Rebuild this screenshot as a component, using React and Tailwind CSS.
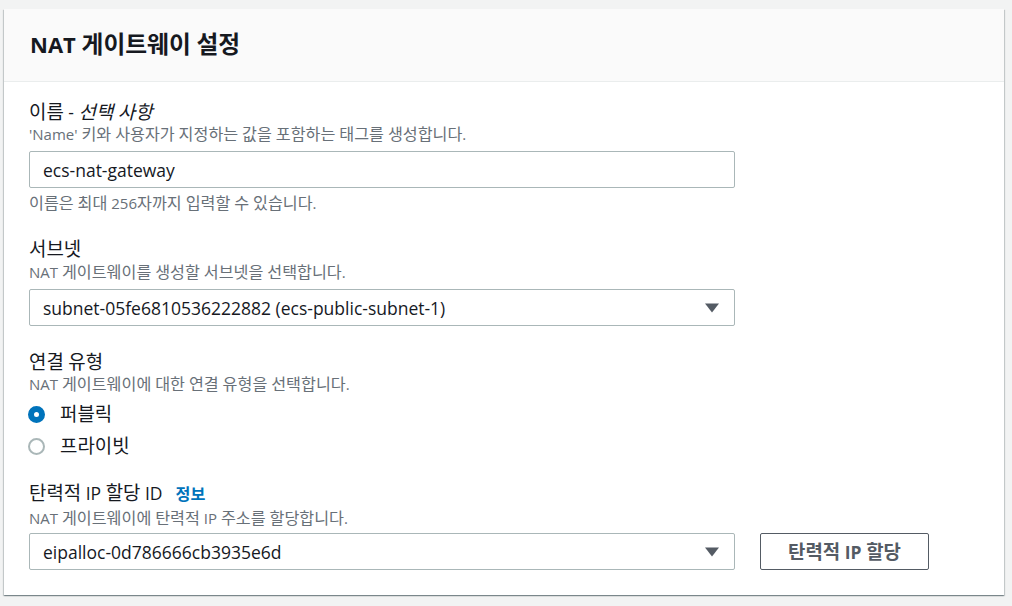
import React from "react";

const font = { fontFamily: "'Open Sans', 'Noto Sans CJK KR', sans-serif" };

// Hangul runs are rendered slightly larger to match the wider Korean face of the reference.
function T({ children }) {
  const s = String(children);
  const parts = s.split(/([\u1100-\u11FF\u3130-\u318F\uAC00-\uD7A3]+)/);
  return (
    <>
      {parts.map((p, i) =>
        /[\u1100-\u11FF\u3130-\u318F\uAC00-\uD7A3]/.test(p) ? (
          <span key={i} className="text-[1.08em]">
            {p}
          </span>
        ) : (
          <React.Fragment key={i}>{p}</React.Fragment>
        )
      )}
    </>
  );
}

function Caret() {
  return (
    <svg width="14" height="10" viewBox="0 0 14 10" className="shrink-0">
      <path d="M0 0.5 L14 0.5 L7 9.5 Z" fill="#545b64" />
    </svg>
  );
}

function Label({ children }) {
  return <div className="text-[17.5px] leading-[22px] text-[#16191f]">{children}</div>;
}

function Desc({ children, className = "" }) {
  return (
    <div className={"text-[15px] leading-[20px] text-[#687078] " + className}>
      <T>{children}</T>
    </div>
  );
}

function SelectBox({ value, className = "" }) {
  return (
    <div
      className={
        "w-[706px] h-[37px] border border-[#aab7b8] rounded-[2px] bg-white flex items-center justify-between pl-[13px] pr-[15px] " +
        className
      }
    >
      <span className="text-[17.5px] text-[#16191f] leading-[22px]">{value}</span>
      <Caret />
    </div>
  );
}

function Radio({ checked, label }) {
  return (
    <div className="flex items-center h-[24px]">
      {checked ? (
        <span className="w-[17px] h-[17px] rounded-full border-[6px] border-[#0073bb] bg-white -ml-[1px] box-border" />
      ) : (
        <span className="w-[17px] h-[17px] rounded-full border-2 border-[#aab7b8] bg-white -ml-[1px] box-border" />
      )}
      <span className="ml-[15px] text-[17.5px] leading-[22px] text-[#16191f]">
        <T>{label}</T>
      </span>
    </div>
  );
}

export default function App() {
  return (
    <div className="w-[1012px] h-[606px] bg-[#f2f3f3] pt-[9px] pl-[4px] overflow-hidden" style={font}>
      <div className="w-[1000px] bg-white shadow-[0_1px_1px_0_rgba(0,28,36,0.3),1px_1px_1px_0_rgba(0,28,36,0.15),-1px_1px_1px_0_rgba(0,28,36,0.15)]">
        <div className="bg-[#fafafa] border-b border-[#eaeded] pl-[26px] pt-[20px] pb-[22px]">
          <h2 className="text-[22px] leading-[30px] font-bold text-[#16191f]">
            <T>NAT 게이트웨이 설정</T>
          </h2>
        </div>
        <div className="pl-[25px] pt-[19px] pb-[25px]">
          <div>
            <Label>
              <T>이름 - </T>
              <i>
                <T>선택 사항</T>
              </i>
            </Label>
            <Desc className="mt-[1px]">'Name' 키와 사용자가 지정하는 값을 포함하는 태그를 생성합니다.</Desc>
            <div className="mt-[7px] w-[706px] h-[37px] border border-[#aab7b8] rounded-[2px] bg-white flex items-center pl-[13px]">
              <span className="text-[17.5px] text-[#16191f] leading-[22px]">ecs-nat-gateway</span>
            </div>
            <Desc className="mt-[5px]">이름은 최대 256자까지 입력할 수 있습니다.</Desc>
          </div>

          <div className="mt-[25px]">
            <Label>
              <T>서브넷</T>
            </Label>
            <Desc className="mt-[2px]">NAT 게이트웨이를 생성할 서브넷을 선택합니다.</Desc>
            <SelectBox className="mt-[7px]" value="subnet-05fe6810536222882 (ecs-public-subnet-1)" />
          </div>

          <div className="mt-[25px]">
            <Label>
              <T>연결 유형</T>
            </Label>
            <Desc className="mt-[1px]">NAT 게이트웨이에 대한 연결 유형을 선택합니다.</Desc>
            <div className="mt-[8px] flex flex-col gap-[8px]">
              <Radio checked label="퍼블릭" />
              <Radio label="프라이빗" />
            </div>
          </div>

          <div className="mt-[24px]">
            <div className="flex items-baseline">
              <Label>
                <T>탄력적 IP 할당 ID</T>
              </Label>
              <span className="ml-[13px] text-[15px] font-semibold text-[#0073bb]">
                <T>정보</T>
              </span>
            </div>
            <Desc className="mt-[2px]">NAT 게이트웨이에 탄력적 IP 주소를 할당합니다.</Desc>
            <div className="mt-[5px] flex items-start gap-[25px]">
              <SelectBox value="eipalloc-0d786666cb3935e6d" />
              <button className="w-[169px] h-[37px] border border-[#545b64] rounded-[2px] bg-white text-[#545b64] font-bold text-[17.5px] leading-[22px]">
                <T>탄력적 IP 할당</T>
              </button>
            </div>
          </div>
        </div>
      </div>
    </div>
  );
}
